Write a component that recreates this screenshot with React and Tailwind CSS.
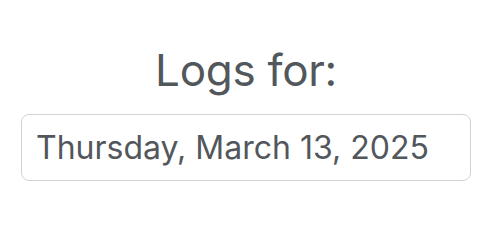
export default function App() {
  return (
    <div className="w-[489px] h-[201px] bg-white flex flex-col items-center pt-[43px] pl-[3px] font-['Inter',sans-serif] text-[#52575c]">
      <h1 className="text-[44px] leading-[54px] font-normal tracking-[-0.3px]">Logs for:</h1>
      <div className="mt-[17px] w-[450px] h-[67px] border border-[#d3d3d3] rounded-[8px] flex items-center px-[14px] text-[32px]">
        Thursday, March 13, 2025
      </div>
    </div>
  );
}
